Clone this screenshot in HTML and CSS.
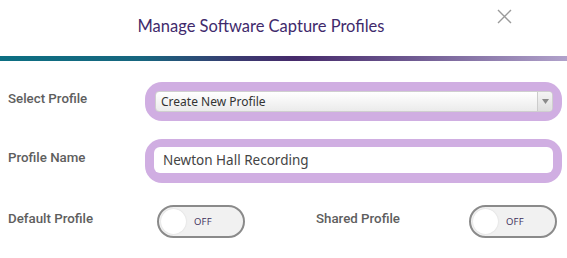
FILE: index.html
```html
<!DOCTYPE html>
<html>
<head>
<meta charset="utf-8">
<link rel="stylesheet" href="styles.css">
</head>
<body>
<div class="dialog">
  <header class="header">
    <h1 class="title">Manage Software Capture Profiles</h1>
    <button class="close" aria-label="Close">
      <svg width="15" height="15" viewBox="0 0 15 15"><path d="M1 1 L14 14 M14 1 L1 14" stroke="#9a9a9a" stroke-width="1.4" fill="none"/></svg>
    </button>
  </header>
  <div class="bar"></div>
  <div class="form">
    <div class="row">
      <label class="label">Select Profile</label>
      <div class="ring ring-select">
        <div class="select">
          <span class="select-text">Create New Profile</span>
          <span class="select-arrow"><svg width="7" height="5" viewBox="0 0 7 5"><path d="M0 0 H7 L3.5 5 Z" fill="#8a8a8a"/></svg></span>
        </div>
      </div>
    </div>
    <div class="row">
      <label class="label">Profile Name</label>
      <div class="ring ring-input">
        <div class="input">Newton Hall Recording</div>
      </div>
    </div>
    <div class="row row-toggles">
      <label class="label">Default Profile</label>
      <div class="toggle-group">
        <div class="toggle"><span class="knob"></span><span class="toggle-text">OFF</span></div>
        <label class="label label-shared">Shared Profile</label>
        <div class="toggle"><span class="knob"></span><span class="toggle-text">OFF</span></div>
      </div>
    </div>
  </div>
</div>
</body>
</html>
```
FILE: styles.css
```css
html, body {
  margin: 0;
  padding: 0;
  background: #fff;
}
body {
  font-family: "Lato", "Open Sans", sans-serif;
  width: 567px;
  height: 258px;
  overflow: hidden;
}
.header {
  display: grid;
  grid-template-columns: 1fr 70px;
  height: 56px;
  align-items: start;
}
.title {
  margin: 0;
  padding: 16px 0 0 25px;
  text-align: center;
  font-size: 16.5px;
  font-weight: 400;
  color: #3f2a6c;
}
.close {
  justify-self: end;
  margin: 9px 55px 0 0;
  padding: 0;
  border: 0;
  background: none;
  width: 15px;
  height: 15px;
  display: flex;
}
.bar {
  height: 5px;
  background: linear-gradient(90deg, #0c6f82 0%, #17667f 25%, #3a3a70 42%, #462a6b 52%, #6d5890 72%, #b1a2cb 100%);
}
.form {
  padding: 21px 5px 0 8px;
  display: flex;
  flex-direction: column;
  gap: 18px;
}
.row {
  display: grid;
  grid-template-columns: 137px 1fr;
  align-items: center;
}
.label {
  font-family: "Roboto", "Lato", sans-serif;
  font-size: 13.3px;
  font-weight: 500;
  color: #5e5e5e;
  padding-bottom: 7px;
}
.ring {
  background: #d0aee2;
  border-radius: 17px;
}
.ring-select {
  padding: 9px 9px 9px 10px;
}
.ring-input {
  padding: 8px 9px 10px 9px;
}
.select {
  height: 19px;
  display: flex;
  align-items: stretch;
  background: linear-gradient(#ffffff, #ebebeb);
  border: 1px solid #cfcfcf;
  border-radius: 4px;
}
.select-text {
  flex: 1;
  padding-left: 5px;
  font-family: "Noto Sans", "Open Sans", sans-serif;
  font-size: 12px;
  line-height: 19px;
  color: #333;
}
.select-arrow {
  width: 14px;
  border-left: 1px solid #cccccc;
  background: linear-gradient(#f4f4f4, #dedede);
  border-radius: 0 4px 4px 0;
  display: flex;
  align-items: center;
  justify-content: center;
}
.input {
  height: 26px;
  box-sizing: border-box;
  background: #fff;
  border-radius: 6px;
  padding-left: 9px;
  font-family: "Noto Sans", "Open Sans", sans-serif;
  font-size: 13.5px;
  line-height: 26px;
  color: #444;
}
.row-toggles {
  margin-top: 4px;
}
.toggle-group {
  display: grid;
  grid-template-columns: 90px 1fr 88px;
  align-items: center;
  padding-left: 12px;
  padding-right: 5px;
}
.label-shared {
  padding-left: 69px;
}
.toggle {
  box-sizing: border-box;
  width: 88px;
  height: 33px;
  border: 2px solid #8a8a8a;
  border-radius: 17px;
  background: #f1f1f1;
  display: flex;
  align-items: center;
  padding-left: 2px;
}
.knob {
  width: 25px;
  height: 25px;
  border-radius: 50%;
  background: #fff;
  box-shadow: 0 0 2px rgba(0,0,0,0.12);
}
.toggle-text {
  margin-left: 8px;
  font-family: "Open Sans", sans-serif;
  font-size: 9.5px;
  color: #3d2f5a;
  letter-spacing: 0.2px;
}
```
